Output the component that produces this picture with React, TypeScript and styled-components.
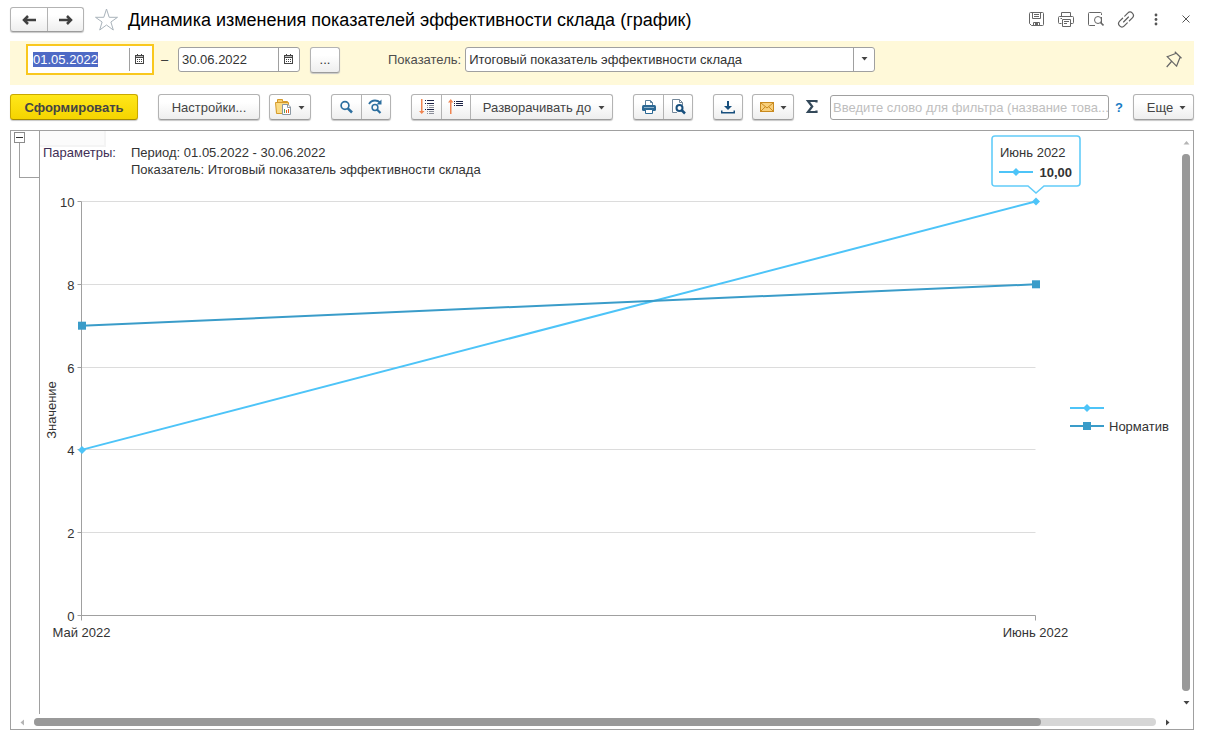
import React, { useEffect, useLayoutEffect, useRef, useState } from 'react';
import styled, { createGlobalStyle, css } from 'styled-components';

const GlobalStyle = createGlobalStyle`
  *, *::before, *::after { box-sizing: border-box; }
  body {
    margin: 0;
    background: #fff;
    color: #333;
    font-family: "Liberation Sans", Arial, sans-serif;
    font-size: 13px;
  }
  button, input, select { font: inherit; color: inherit; }
`;

const Page = styled.div`
  display: flex;
  flex-direction: column;
  min-height: 100vh;
`;

/* ---------- header ---------- */

const Header = styled.header`
  display: flex;
  align-items: center;
  padding: 7px 4px 9px 10px;
`;

const buttonFace = css`
  border: 1px solid #b3b3b3;
  border-bottom-color: #9c9c9c;
  border-radius: 3px;
  background: linear-gradient(#fff 30%, #eeeeee);
  box-shadow: 0 1px 1px #c8c8c8;
`;

const ButtonGroup = styled.div<{ $gap?: number }>`
  ${buttonFace}
  display: flex;
  flex: none;
  margin-left: ${(p) => p.$gap ?? 0}px;
`;

const GroupButton = styled.button<{ $tall?: boolean }>`
  display: flex;
  align-items: center;
  justify-content: center;
  gap: 7px;
  min-width: 29px;
  height: ${(p) => (p.$tall ? 24 : 23)}px;
  padding: 0;
  border: 0;
  background: none;
  color: #444;
  & + & { border-left: 1px solid #b3b3b3; }
`;

const NavButton = styled(GroupButton)`
  width: 36px;
`;

const FavouriteButton = styled.button`
  width: 24px;
  height: 24px;
  margin: 0 9px 0 11px;
  padding: 0;
  border: 0;
  background: none;
`;

const Title = styled.h1`
  flex: 1;
  margin: 0;
  color: #000;
  font-size: 18px;
  font-weight: 400;
  line-height: 24px;
`;

const WindowButton = styled.button`
  display: flex;
  align-items: center;
  justify-content: center;
  width: 30px;
  height: 24px;
  padding: 0;
  border: 0;
  background: none;
`;

/* ---------- filter band ---------- */

const FilterBand = styled.section`
  display: flex;
  align-items: center;
  margin: 0 11px 0 10px;
  padding: 3px 12px 10px 16px;
  background: #fff9d9;
`;

const FocusRing = styled.div`
  padding: 1px;
  background: #fff;
  border: 2px solid #f9c81e;
`;

const Field = styled.div<{ $plain?: boolean }>`
  display: flex;
  width: 122px;
  height: 25px;
  border: 1px solid ${(p) => (p.$plain ? '#fff' : '#a0a0a0')};
  border-radius: 3px;
  background: #fff;
`;

const DateInput = styled.input`
  flex: 1;
  min-width: 0;
  padding: 0 3px;
  border: 0;
  outline: 0;
  background: none;
  &::selection { background: rgba(76, 104, 196, 0.99); color: #fff; }
`;

const FieldButton = styled.button`
  display: flex;
  align-items: center;
  justify-content: center;
  width: 21px;
  padding: 0 2px 2px 0;
  border: 0;
  border-left: 1px solid #a0a0a0;
  background: none;
`;

const Dash = styled.span`
  width: 24px;
  padding-right: 3px;
  text-align: center;
`;

const PeriodButton = styled.button`
  ${buttonFace}
  width: 30px;
  height: 26px;
  margin-left: 10px;
  padding: 0;
`;

const FieldLabel = styled.label`
  margin: 0 4px 0 48px;
  color: #4d4d4d;
`;

const SelectBox = styled.div`
  display: grid;
  grid-template-columns: 1fr 21px;
  width: 410px;
  height: 25px;
  border: 1px solid #a0a0a0;
  border-radius: 3px;
  background: #fff;
`;

const Select = styled.select`
  grid-area: 1 / 1 / 2 / 3;
  padding: 0 24px 0 3px;
  border: 0;
  outline: 0;
  background: none;
  appearance: none;
`;

const SelectArrow = styled.span`
  display: flex;
  align-items: center;
  justify-content: center;
  grid-area: 1 / 2 / 2 / 3;
  padding-bottom: 2px;
  border-left: 1px solid #a0a0a0;
  pointer-events: none;
`;

const PinButton = styled.button`
  width: 16px;
  height: 18px;
  margin-left: auto;
  padding: 0;
  border: 0;
  background: none;
`;

/* ---------- command bar ---------- */

const CommandBar = styled.div`
  display: flex;
  align-items: center;
  padding: 9px 11px 10px 10px;
`;

const CommandButton = styled.button<{ $gap?: number; $width: number }>`
  ${buttonFace}
  display: flex;
  flex: none;
  align-items: center;
  justify-content: center;
  gap: 6px;
  width: ${(p) => p.$width}px;
  height: 26px;
  margin-left: ${(p) => p.$gap ?? 0}px;
  padding: 0;
  color: #444;
`;

const PrimaryButton = styled(CommandButton)`
  border-color: #c9a800;
  border-bottom-color: #a68b00;
  background: linear-gradient(#ffe71a, #f5d400);
  font-weight: 700;
`;

const ExpandButton = styled(GroupButton)`
  width: 142px;
  padding-left: 5px;
`;

const MoreButton = styled(CommandButton)`
  padding-left: 6px;
`;

const SumButton = styled.button`
  width: 14px;
  height: 18px;
  margin: 0 11px;
  padding: 0;
  border: 0;
  background: none;
`;

const FilterInput = styled.input`
  flex: 1;
  min-width: 0;
  height: 25px;
  padding: 0 0 0 2px;
  border: 1px solid #a0a0a0;
  border-radius: 3px;
  outline: 0;
  &::placeholder { color: #bebebe; }
`;

const HelpButton = styled.button`
  width: 24px;
  padding: 0 4px 0 0;
  border: 0;
  background: none;
  color: #1a7cc4;
  font-weight: 700;
`;

/* ---------- report ---------- */

const Report = styled.main`
  display: flex;
  flex: 1;
  flex-direction: column;
  margin: 0 11px 0 10px;
  border: 1px solid #a0a0a0;
`;

const ReportBody = styled.div`
  display: flex;
  flex: 1;
`;

const Outline = styled.div`
  width: 29px;
  padding: 1px 0 0 3px;
  border-right: 1px solid #a0a0a0;
`;

const CollapseButton = styled.button`
  display: flex;
  align-items: center;
  justify-content: center;
  width: 11px;
  height: 11px;
  padding: 0;
  border: 1px solid #8c8c8c;
  background: #fff;
`;

const OutlineBracket = styled.div`
  height: 35px;
  margin-left: 5px;
  border: solid #a0a0a0;
  border-width: 0 0 1px 1px;
`;

const Sheet = styled.div`
  position: relative;
  display: flex;
  flex: 1;
  flex-direction: column;
  min-width: 0;
  padding-top: 13px;
`;

const HeaderCell = styled.div`
  position: absolute;
  top: 0;
  left: 0;
  width: 66px;
  height: 16px;
  border: solid #f4f4f4;
  border-width: 0 2px 2px 0;
  background: #fbfbfb;
`;

const Parameters = styled.dl`
  position: relative;
  display: flex;
  margin: 0 0 2px;
  padding-left: 3px;
  line-height: 17px;
  dt { width: 88px; color: #3f2f55; }
  dd { margin: 0; }
`;

const ChartArea = styled.div`
  position: relative;
  flex: 1;
  min-height: 300px;
`;

const ChartSvg = styled.svg`
  position: absolute;
  inset: 0;
  overflow: visible;
  font-size: 13px;
  text { fill: #333; }
`;

const VerticalBar = styled.div`
  display: flex;
  flex-direction: column;
  width: 14px;
`;

const HorizontalBar = styled.div`
  display: flex;
  height: 15px;
  padding: 1px 14px 0 0;
`;

const ScrollButton = styled.button`
  display: flex;
  flex: none;
  align-items: center;
  justify-content: center;
  min-width: 14px;
  height: 23px;
  padding: 0;
  border: 0;
  background: none;
  ${HorizontalBar} & { width: 23px; height: 14px; }
`;

const Track = styled.div`
  flex: 1;
  border-radius: 4px;
  background: #d6d6d6;
  ${VerticalBar} & { margin: 0 3px; }
  ${HorizontalBar} & { margin: 3px 0; }
`;

const Thumb = styled.div`
  height: 100%;
  border-radius: 4px;
  background: #999;
`;

/* ---------- icons ---------- */

const Caret = ({ dir = 'down', color = '#444' }: { dir?: 'down' | 'up' | 'left' | 'right'; color?: string }) => {
  const shapes = { down: 'M.5 2H6.500L3.500 5.500Z', up: 'M.5 5.500H6.500L3.500 2Z', left: 'M5 .5V6.500L1.500 3.500Z', right: 'M2 .5V6.500L5.500 3.500Z' };
  return (
    <svg width="7" height="7" viewBox="0 0 7 7" aria-hidden="true">
      <path d={shapes[dir]} fill={color} />
    </svg>
  );
};

const ArrowIcon = ({ back }: { back?: boolean }) => (
  <svg width="14" height="10" viewBox="0 0 14 10" aria-hidden="true">
    <path
      d={back ? 'M14 5H2M6 1L2 5L6 9' : 'M0 5H12M8 1L12 5L8 9'}
      fill="none"
      stroke="#404040"
      strokeWidth="2.500"
    />
  </svg>
);

const StarIcon = () => (
  <svg width="24" height="24" viewBox="0 0 24 24" aria-hidden="true">
    <path
      d="M11.500 1L14.200 9.300H22.500L15.900 14L18.300 22L11.500 17L4.700 22L7.100 14L.5 9.300H8.800Z"
      fill="#fff"
      stroke="#a9b3bb"
    />
  </svg>
);

const SaveIcon = () => (
  <svg width="16" height="16" viewBox="0 0 16 16" fill="none" stroke="#666" aria-hidden="true">
    <path d="M2.500 .5H14.500Q15.500 .5 15.500 1.500V12.500Q15.500 13.500 14.500 13.500H3.500L1.500 11.500V1.500Q1.500 .5 2.500 .5Z" />
    <path d="M4.500 .5V6.500H12.500V.5M6 2.500H11M6 4.500H11M5.500 13.500V10.500H11.500V13.500" />
    <path d="M7 11H10V13H7Z" fill="#666" stroke="none" />
  </svg>
);

const PrinterIcon = () => (
  <svg width="16" height="16" viewBox="0 0 16 16" fill="none" stroke="#666" aria-hidden="true">
    <path d="M3.500 4.500V.5H12.500V4.500M3.500 11.500H1.500Q.5 11.500 .5 10.500V5.500Q.5 4.500 1.500 4.500H14.500Q15.500 4.500 15.500 5.500V10.500Q15.500 11.500 14.500 11.500H12.500" />
    <path d="M4.500 7.500H12.500V14.500H4.500ZM6 9.500H11M6 11.500H9M2.500 6.500H4" />
  </svg>
);

const PreviewIcon = () => (
  <svg width="16" height="16" viewBox="0 0 16 16" fill="none" stroke="#666" aria-hidden="true">
    <path d="M13.500 3V1.500Q13.500 .5 12.500 .5H1.500Q.5 .5 .5 1.500V12.500Q.5 13.500 1.500 13.500H7" />
    <path d="M13.500 5V11" />
    <circle cx="10" cy="8" r="3.500" />
    <path d="M12.500 10.500L15.500 13.500" strokeWidth="1.600" />
  </svg>
);

const LinkIcon = () => (
  <svg width="18" height="18" viewBox="0 0 18 18" fill="none" stroke="#5f5f5f" strokeWidth="1.200" strokeLinecap="round" aria-hidden="true">
    <g transform="rotate(-45 9 8.500)">
      <path d="M7.500 5.200H3.300A3.300 3.300 0 0 0 3.300 11.800H7.500" />
      <path d="M10.500 5.200H14.700A3.300 3.300 0 0 1 14.700 11.800H10.500" />
      <path d="M5.500 8.500H12.500" />
    </g>
  </svg>
);

const MoreIcon = () => (
  <svg width="4" height="14" viewBox="0 0 4 14" fill="#555" aria-hidden="true">
    <circle cx="2" cy="2" r="1.400" />
    <circle cx="2" cy="6.500" r="1.400" />
    <circle cx="2" cy="11" r="1.400" />
  </svg>
);

const CloseIcon = () => (
  <svg width="8" height="10" viewBox="0 0 8 10" stroke="#555" aria-hidden="true">
    <path d="M.5 .5L7.500 7.500M7.500 .5L.5 7.500" />
  </svg>
);

const CalendarIcon = () => (
  <svg width="9" height="10" viewBox="0 0 9 10" shapeRendering="crispEdges" aria-hidden="true">
    <path d="M0 1H9V10H0ZM1 4V9H8V4Z" fill="#444" fillRule="evenodd" />
    <path d="M2 0H3V2H2ZM6 0H7V2H6ZM2 5H3V6H2ZM4 5H5V6H4ZM6 5H7V6H6ZM2 7H3V8H2ZM4 7H5V8H4ZM6 7H7V8H6Z" fill="#444" />
    <path d="M1 2H8V3H1Z" fill="#bbb" />
  </svg>
);

const PinIcon = () => (
  <svg width="16" height="18" viewBox="0 0 16 18" fill="none" stroke="#666" strokeWidth="1.200" aria-hidden="true">
    <path d="M8.800 .8L15.500 7.200M10.300 2.300L1.200 5.700M14.200 6L10.600 15M.7 5.200L11 15.600M5.500 10.500L.7 16" />
  </svg>
);

const ReportFolderIcon = () => (
  <svg width="17" height="16" viewBox="0 0 17 16" aria-hidden="true">
    <path d="M1.500 13.500V3.500H2.500V.5H7.500V2.500H12.500V5.500" fill="#f6cf72" stroke="#d59a2b" />
    <path d="M.5 3.500H13.500V6.500H7.500V14.500H1.500Z" fill="#fbdc86" stroke="#d59a2b" />
    <path d="M7.500 5.500H13L15.500 8V15.500H7.500Z" fill="#fff" stroke="#8b98a3" />
    <path d="M12.500 5.500V8.500H15.500" fill="none" stroke="#8b98a3" />
    <path d="M9 10H10V14H9Z" fill="#5b9f64" />
    <path d="M11 11H12V14H11Z" fill="#e06020" />
    <path d="M13 10H14V14H13Z" fill="#e06020" />
  </svg>
);

const SearchIcon = () => (
  <svg width="14" height="14" viewBox="1 0 14 14" fill="none" stroke="#2d6f9f" aria-hidden="true">
    <circle cx="6" cy="5.500" r="3.900" strokeWidth="1.700" />
    <path d="M8.800 8.300L13 12.500" strokeWidth="2.500" />
  </svg>
);

const SearchNextIcon = () => (
  <svg width="16" height="16" viewBox="1 0 16 16" fill="none" stroke="#2d6f9f" aria-hidden="true">
    <path d="M2 5Q4 1.500 8 1.500Q11 1.500 13 3.500" strokeWidth="1.800" />
    <path d="M14.500 .5V5.500H9.500Z" fill="#2d6f9f" stroke="none" />
    <circle cx="8" cy="8.500" r="2.900" strokeWidth="1.500" />
    <path d="M10 10.500L13.500 14" strokeWidth="2.200" />
  </svg>
);

const ExpandIcon = () => (
  <svg width="16" height="16" viewBox="0 0 16 16" aria-hidden="true">
    <path d="M2 0H3.500V12H5.500L2.750 15L0 12H2Z" fill="#f08552" />
    <g shapeRendering="crispEdges">
      <path d="M6 1H7V2H6ZM8 1H15V2H8ZM6 4H7V5H6ZM8 4H15V5H8Z" fill="#1c2245" />
      <path d="M8 6H9V7H8ZM10 6H15V7H10ZM8 8H9V9H8ZM10 8H15V9H10ZM8 12H9V13H8ZM10 12H15V13H10ZM8 14H9V15H8ZM10 14H15V15H10Z" fill="#8b8e99" />
      <path d="M6 10H7V11H6ZM8 10H15V11H8Z" fill="#1c2245" />
    </g>
  </svg>
);

const CollapseIcon = () => (
  <svg width="16" height="16" viewBox="0 0 16 16" aria-hidden="true">
    <path d="M2 15H3.500V3.500H5.500L2.750 0L0 3.500H2Z" fill="#f08552" />
    <path d="M6 2H7V3H6ZM8 2H15V3H8ZM6 4H7V5H6ZM8 4H15V5H8ZM6 6H7V7H6ZM8 6H15V7H8Z" fill="#1c2245" shapeRendering="crispEdges" />
  </svg>
);

const PrintIcon = () => (
  <svg width="14" height="14" viewBox="0 0 14 14" aria-hidden="true">
    <path d="M3.500 5V.5H8.500L10.500 2.500V5" fill="#fff" stroke="#5b7f9b" />
    <path d="M8.500 .5V2.500H10.500" fill="none" stroke="#5b7f9b" />
    <rect x="0" y="5" width="14" height="6" rx="1.500" fill="#2b6894" />
    <path d="M2 7.500H12" stroke="#8eb2cc" />
    <path d="M3.500 9.500H10.500V13.500H3.500Z" fill="#fff" stroke="#2b6894" />
  </svg>
);

const PreviewPageIcon = () => (
  <svg width="15" height="16" viewBox="0 0 15 16" aria-hidden="true">
    <path d="M6 13.500H1.500V.5H8.500L11.500 3.500V6" fill="#fff" stroke="#74889a" />
    <path d="M8.500 .5V3.500H11.500" fill="none" stroke="#74889a" />
    <circle cx="8.500" cy="9" r="3" fill="#fff" stroke="#174f7d" strokeWidth="2" />
    <path d="M10.500 11L14 14.500" stroke="#174f7d" strokeWidth="2.500" />
  </svg>
);

const DownloadIcon = () => (
  <svg width="14" height="13" viewBox="0 0 14 13" fill="#174f7d" aria-hidden="true">
    <path d="M6 0H8V5H11L7 9L3 5H6ZM0 9.500H1.500V11H12.500V9.500H14V12.500H0Z" />
  </svg>
);

const MailIcon = () => (
  <svg width="14" height="10" viewBox="0 0 14 10" aria-hidden="true">
    <rect x=".5" y=".5" width="13" height="9" fill="#f8cf7b" stroke="#c98a1f" />
    <path d="M1 1L7 6L13 1M1 9L5.300 4.800M13 9L8.700 4.800" fill="none" stroke="#c98a1f" />
  </svg>
);

const SumIcon = () => (
  <svg width="14" height="16" viewBox="0 0 14 16" fill="none" aria-hidden="true">
    <path d="M11.500 4.500V3H3L7.200 8.500L3 14H11.500V12.500" stroke="#34495a" strokeWidth="2.200" />
  </svg>
);

/* ---------- chart ---------- */

const LIGHT = '#4dc4f8';
const DARK = '#3a9cc9';
const MONTHS = ['Май 2022', 'Июнь 2022'];
const SERIES = [
  { name: '', color: LIGHT, values: [4, 10] },
  { name: 'Норматив', color: DARK, values: [7, 8] },
];
const TICKS = [0, 2, 4, 6, 8, 10];

const Marker = ({ x, y, color }: { x: number; y: number; color: string }) =>
  color === LIGHT ? (
    <path d={`M${x - 4} ${y}L${x} ${y - 4}L${x + 4} ${y}L${x} ${y + 4}Z`} fill={color} />
  ) : (
    <rect x={x - 4} y={y - 4} width="8" height="8" fill={color} />
  );

const Key = ({ x, y, color }: { x: number; y: number; color: string }) => (
  <>
    <path d={`M${x} ${y}H${x + 34}`} stroke={color} strokeWidth="2" />
    <Marker x={x + 17} y={y} color={color} />
  </>
);

function Chart() {
  const area = useRef<HTMLDivElement>(null);
  const [size, setSize] = useState({ w: 1139, h: 534 });

  useLayoutEffect(() => {
    const node = area.current;
    if (!node) return;
    const measure = () => setSize({ w: node.clientWidth, h: node.clientHeight });
    measure();
    const observer = new ResizeObserver(measure);
    observer.observe(node);
    return () => observer.disconnect();
  }, []);

  const left = 41.5;
  const right = size.w - 143.5;
  const top = 21.5;
  const bottom = size.h - 98.5;
  const xs = [left, right];
  const y = (v: number) => bottom - ((bottom - top) * v) / 10;
  const middle = Math.round((top + bottom) / 2);

  return (
    <ChartArea ref={area}>
      <ChartSvg width={size.w} height={size.h} role="img" aria-label="График показателей">
        {TICKS.map((t) => {
          const line = Math.floor(y(t)) + 0.5;
          return (
            <g key={t}>
              {t > 0 && <path d={`M${left} ${line}H${right}`} stroke="#dcdcdc" />}
              <path d={`M${left - 4} ${line}H${left}`} stroke="#a0a0a0" />
              <text x={left - 7} y={line + 5} textAnchor="end">{t}</text>
            </g>
          );
        })}
        <path d={`M${left} ${top}V${bottom + 5}M${left} ${bottom}H${right}V${bottom + 5}`} fill="none" stroke="#a0a0a0" />
        {MONTHS.map((m, i) => (
          <text key={m} x={xs[i]} y={bottom + 21} textAnchor="middle">{m}</text>
        ))}
        <text transform={`translate(16 ${middle + 1}) rotate(-90)`} textAnchor="middle">Значение</text>
        {SERIES.map((s) => (
          <g key={s.color}>
            <path d={`M${left} ${y(s.values[0])}L${right} ${y(s.values[1])}`} stroke={s.color} strokeWidth="2" />
            {s.values.map((v, i) => <Marker key={i} x={xs[i] + 0.5} y={y(v)} color={s.color} />)}
          </g>
        ))}
        {SERIES.map((s, i) => (
          <g key={s.color}>
            <Key x={size.w - 109} y={middle - 1 + i * 18} color={s.color} />
            <text x={size.w - 70} y={middle + 4 + i * 18}>{s.name}</text>
          </g>
        ))}
        <g transform={`translate(${right - 43.5} ${top - 65.5})`}>
          <path
            d="M3 0H85Q88 0 88 3V47Q88 50 85 50H52L44 57L36 50H3Q0 50 0 47V3Q0 0 3 0Z"
            fill="#fff"
            stroke="#62ccf9"
            strokeWidth="1.600"
          />
          <text x="8" y="21">{MONTHS[1]}</text>
          <Key x={7} y={36} color={LIGHT} />
          <text x="80" y="41" textAnchor="end" fontWeight="700">10,00</text>
        </g>
      </ChartSvg>
    </ChartArea>
  );
}

/* ---------- page ---------- */

export default function App() {
  const startDate = useRef<HTMLInputElement>(null);

  useEffect(() => {
    startDate.current?.focus();
    startDate.current?.select();
  }, []);

  return (
    <Page>
      <GlobalStyle />
      <Header>
        <ButtonGroup>
          <NavButton aria-label="Назад"><ArrowIcon back /></NavButton>
          <NavButton aria-label="Вперед"><ArrowIcon /></NavButton>
        </ButtonGroup>
        <FavouriteButton aria-label="В избранное"><StarIcon /></FavouriteButton>
        <Title>Динамика изменения показателей эффективности склада (график)</Title>
        <WindowButton aria-label="Сохранить"><SaveIcon /></WindowButton>
        <WindowButton aria-label="Печать"><PrinterIcon /></WindowButton>
        <WindowButton aria-label="Просмотр"><PreviewIcon /></WindowButton>
        <WindowButton aria-label="Ссылка"><LinkIcon /></WindowButton>
        <WindowButton aria-label="Меню"><MoreIcon /></WindowButton>
        <WindowButton aria-label="Закрыть"><CloseIcon /></WindowButton>
      </Header>

      <FilterBand>
        <FocusRing>
          <Field $plain>
            <DateInput ref={startDate} aria-label="Начало периода" defaultValue="01.05.2022" />
            <FieldButton aria-label="Календарь"><CalendarIcon /></FieldButton>
          </Field>
        </FocusRing>
        <Dash>–</Dash>
        <Field>
          <DateInput aria-label="Конец периода" defaultValue="30.06.2022" />
          <FieldButton aria-label="Календарь"><CalendarIcon /></FieldButton>
        </Field>
        <PeriodButton aria-label="Выбрать период">...</PeriodButton>
        <FieldLabel htmlFor="indicator">Показатель:</FieldLabel>
        <SelectBox>
          <Select id="indicator">
            <option>Итоговый показатель эффективности склада</option>
          </Select>
          <SelectArrow><Caret /></SelectArrow>
        </SelectBox>
        <PinButton aria-label="Закрепить"><PinIcon /></PinButton>
      </FilterBand>

      <CommandBar>
        <PrimaryButton $width={128}>Сформировать</PrimaryButton>
        <CommandButton $width={102} $gap={20}>Настройки...</CommandButton>
        <CommandButton $width={42} $gap={9} aria-label="Варианты отчета"><ReportFolderIcon /><Caret /></CommandButton>
        <ButtonGroup $gap={20}>
          <GroupButton $tall aria-label="Найти"><SearchIcon /></GroupButton>
          <GroupButton $tall aria-label="Найти далее"><SearchNextIcon /></GroupButton>
        </ButtonGroup>
        <ButtonGroup $gap={20}>
          <GroupButton $tall aria-label="Развернуть"><ExpandIcon /></GroupButton>
          <GroupButton $tall aria-label="Свернуть"><CollapseIcon /></GroupButton>
          <ExpandButton $tall>Разворачивать до<Caret /></ExpandButton>
        </ButtonGroup>
        <ButtonGroup $gap={20}>
          <GroupButton $tall aria-label="Печать отчета"><PrintIcon /></GroupButton>
          <GroupButton $tall aria-label="Предварительный просмотр"><PreviewPageIcon /></GroupButton>
        </ButtonGroup>
        <CommandButton $width={30} $gap={20} aria-label="Сохранить отчет"><DownloadIcon /></CommandButton>
        <CommandButton $width={42} $gap={9} aria-label="Отправить"><MailIcon /><Caret /></CommandButton>
        <SumButton aria-label="Сумма"><SumIcon /></SumButton>
        <FilterInput aria-label="Фильтр" placeholder="Введите слово для фильтра (название това..." />
        <HelpButton>?</HelpButton>
        <MoreButton $width={61}>Еще<Caret /></MoreButton>
      </CommandBar>

      <Report>
        <ReportBody>
          <Outline>
            <CollapseButton aria-label="Свернуть группу">
              <svg width="7" height="1" aria-hidden="true"><path d="M0 .5H7" stroke="#333" /></svg>
            </CollapseButton>
            <OutlineBracket />
          </Outline>
          <Sheet>
            <HeaderCell />
            <Parameters>
              <dt>Параметры:</dt>
              <dd>
                Период: 01.05.2022 - 30.06.2022
                <br />
                Показатель: Итоговый показатель эффективности склада
              </dd>
            </Parameters>
            <Chart />
          </Sheet>
          <VerticalBar>
            <ScrollButton aria-label="Вверх"><Caret dir="up" color="#b5b5b5" /></ScrollButton>
            <Track><Thumb /></Track>
            <ScrollButton aria-label="Вниз"><Caret /></ScrollButton>
          </VerticalBar>
        </ReportBody>
        <HorizontalBar>
          <ScrollButton aria-label="Влево"><Caret dir="left" color="#b5b5b5" /></ScrollButton>
          <Track><Thumb style={{ width: '89.75%' }} /></Track>
          <ScrollButton aria-label="Вправо"><Caret dir="right" /></ScrollButton>
        </HorizontalBar>
      </Report>
    </Page>
  );
}
